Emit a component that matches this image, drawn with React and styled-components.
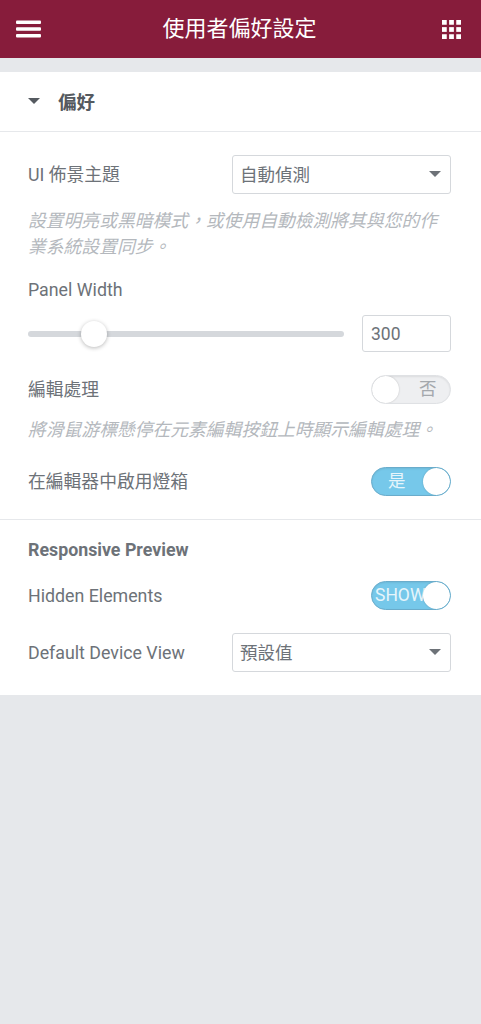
import React from 'react';
import styled, { createGlobalStyle } from 'styled-components';

const GlobalStyle = createGlobalStyle`
  html, body {
    margin: 0;
    padding: 0;
    background: #e6e8eb;
    font-family: Roboto, "Noto Sans CJK TC", sans-serif;
  }
`;

const Page = styled.div`
  width: 481px;
  height: 1024px;
  overflow: hidden;
  background: #e6e8eb;
`;

const Header = styled.header`
  height: 58px;
  padding: 0 20px 0 16px;
  display: flex;
  align-items: center;
  justify-content: space-between;
  background: #871c3b;
  color: #fff;
`;

const HeaderTitle = styled.h1`
  margin: 0 4px 0 0;
  font-size: 22px;
  font-weight: 400;
  line-height: 58px;
`;

const Panel = styled.main`
  margin-top: 14px;
  background: #fff;
`;

const SectionHead = styled.div`
  height: 60px;
  padding: 0 0 2px 28px;
  box-sizing: border-box;
  display: flex;
  align-items: center;
  gap: 18px;
  border-bottom: 1px solid #e6e8eb;
`;

const SectionTitle = styled.h2`
  margin: 0;
  font-size: 18.5px;
  font-weight: 700;
  color: #555a60;
`;

const Caret = styled.span`
  width: 0;
  height: 0;
  border-left: ${(p) => p.$size || 6}px solid transparent;
  border-right: ${(p) => p.$size || 6}px solid transparent;
  border-top: ${(p) => p.$size || 6}px solid ${(p) => p.$color || '#555a60'};
`;

const Section = styled.section`
  padding: ${(p) => p.$padding};
  border-bottom: ${(p) => (p.$divider ? '1px solid #e6e8eb' : 'none')};
`;

const Row = styled.div`
  height: ${(p) => p.$height}px;
  margin-top: ${(p) => p.$top || 0}px;
  display: flex;
  align-items: center;
  justify-content: space-between;
`;

const Label = styled.label`
  font-size: 17.8px;
  line-height: 24px;
  color: #6d7278;
`;

const GroupTitle = styled.h3`
  margin: 0;
  font-size: 17.8px;
  line-height: 24px;
  font-weight: 700;
  color: #6d7278;
`;

const Description = styled.p`
  margin: ${(p) => p.$top}px 0 0;
  font-size: 17.8px;
  line-height: 26px;
  font-style: italic;
  color: #b4b8bd;
`;

const Select = styled.div`
  box-sizing: border-box;
  width: 219px;
  height: 39px;
  padding: 0 9px 2px 7px;
  display: flex;
  align-items: center;
  justify-content: space-between;
  border: 1px solid #d5d8dc;
  border-radius: 3px;
  font-size: 17.5px;
  color: #6d7278;
`;

const Slider = styled.div`
  width: 316px;
  height: 6px;
  border-radius: 3px;
  background: #d5d8dc;
  position: relative;
`;

const Thumb = styled.span`
  position: absolute;
  left: 53px;
  top: -10px;
  width: 26px;
  height: 26px;
  border-radius: 50%;
  background: #fff;
  box-shadow: 0 1px 4px rgba(0, 0, 0, 0.28);
`;

const NumberBox = styled.div`
  box-sizing: border-box;
  width: 89px;
  height: 37px;
  padding-left: 8px;
  display: flex;
  align-items: center;
  border: 1px solid #d5d8dc;
  border-radius: 3px;
  font-size: 17.5px;
  color: #6d7278;
`;

const Toggle = styled.div`
  box-sizing: border-box;
  width: 80px;
  height: 29px;
  border-radius: 15px;
  position: relative;
  overflow: hidden;
  display: flex;
  align-items: center;
  font-size: 17.5px;
  background: ${(p) => (p.$on ? '#76c8ea' : '#eeeff1')};
  color: ${(p) => (p.$on ? '#e6f5fb' : '#a4a8ad')};
  border: 1px solid ${(p) => (p.$on ? '#6aaccb' : '#dfe1e4')};
  box-shadow: inset 0 1px 2px rgba(0, 0, 0, 0.08);
`;

const ToggleText = styled.span`
  position: absolute;
  left: ${(p) => p.$left}px;
  line-height: 27px;
`;

const Knob = styled.span`
  position: absolute;
  top: 0;
  ${(p) => (p.$on ? 'right: 0;' : 'left: 0;')}
  width: 27px;
  height: 27px;
  border-radius: 50%;
  background: #fff;
  box-shadow: 0 0 2px rgba(0, 0, 0, 0.2);
`;

const Hamburger = () => (
  <svg width="25" height="18" viewBox="0 0 25 18" fill="#fff">
    <rect y="0.5" width="25" height="3.4" rx="1" />
    <rect y="7.3" width="25" height="3.4" rx="1" />
    <rect y="14.1" width="25" height="3.4" rx="1" />
  </svg>
);

const Apps = () => (
  <svg width="19" height="19" viewBox="0 0 20 20" fill="#fff">
    {[0, 7.5, 15].map((y) =>
      [0, 7.5, 15].map((x) => <rect key={`${x}-${y}`} x={x} y={y} width="5" height="5" />)
    )}
  </svg>
);

const SelectBox = ({ value }) => (
  <Select>
    {value}
    <Caret $size={6} $color="#6d7278" />
  </Select>
);

export default function App() {
  return (
    <Page>
      <GlobalStyle />
      <Header>
        <Hamburger />
        <HeaderTitle>使用者偏好設定</HeaderTitle>
        <Apps />
      </Header>
      <Panel>
        <SectionHead>
          <Caret />
          <SectionTitle>偏好</SectionTitle>
        </SectionHead>
        <Section $divider $padding="23px 30px 23px 28px">
          <Row $height={39}>
            <Label>UI 佈景主題</Label>
            <SelectBox value="自動偵測" />
          </Row>
          <Description $top={14}>設置明亮或黑暗模式，或使用自動檢測將其與您的作業系統設置同步。</Description>
          <Row $height={24} $top={18}>
            <Label>Panel Width</Label>
          </Row>
          <Row $height={37} $top={13}>
            <Slider>
              <Thumb />
            </Slider>
            <NumberBox>300</NumberBox>
          </Row>
          <Row $height={29} $top={23}>
            <Label>編輯處理</Label>
            <Toggle>
              <ToggleText $left={47}>否</ToggleText>
              <Knob />
            </Toggle>
          </Row>
          <Description $top={13}>將滑鼠游標懸停在元素編輯按鈕上時顯示編輯處理。</Description>
          <Row $height={29} $top={24}>
            <Label>在編輯器中啟用燈箱</Label>
            <Toggle $on>
              <ToggleText $left={16}>是</ToggleText>
              <Knob $on />
            </Toggle>
          </Row>
        </Section>
        <Section $padding="18px 30px 23px 28px">
          <GroupTitle>Responsive Preview</GroupTitle>
          <Row $height={29} $top={19}>
            <Label>Hidden Elements</Label>
            <Toggle $on>
              <ToggleText $left={3}>SHOW</ToggleText>
              <Knob $on />
            </Toggle>
          </Row>
          <Row $height={39} $top={23}>
            <Label>Default Device View</Label>
            <SelectBox value="預設值" />
          </Row>
        </Section>
      </Panel>
    </Page>
  );
}
